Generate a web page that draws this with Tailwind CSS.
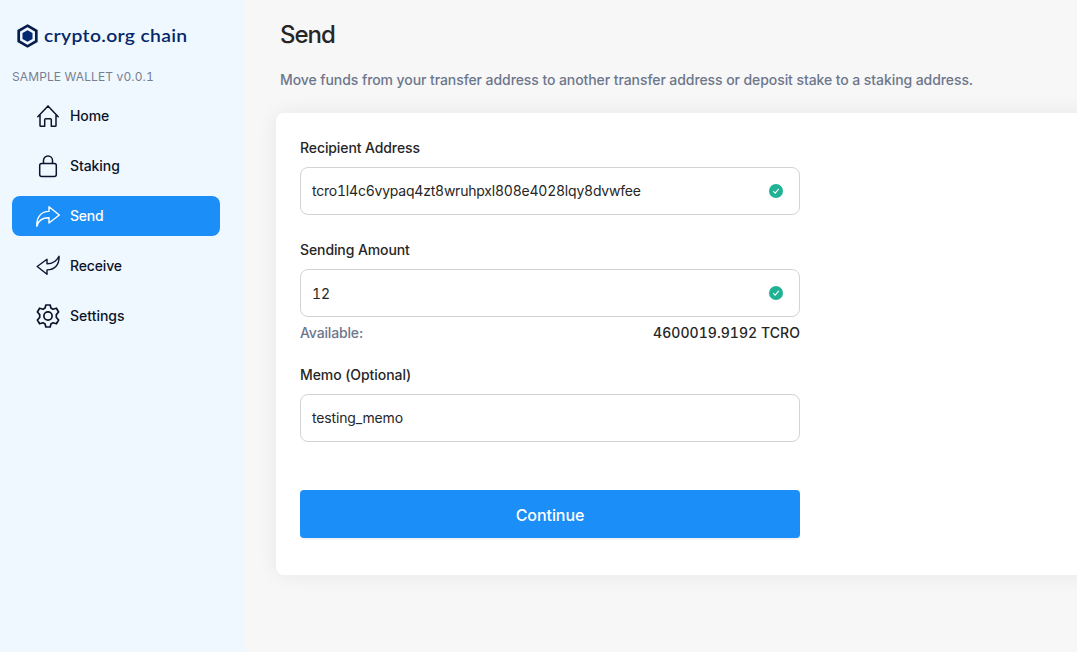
<!DOCTYPE html>
<html lang="en">
<head>
<meta charset="utf-8">
<title>Crypto.org Chain Wallet</title>
<script src="https://cdn.jsdelivr.net/npm/@tailwindcss/browser@4"></script>
</head>
<body class="flex h-screen overflow-hidden bg-[#f7f7f7] font-['Inter',sans-serif] text-sm font-medium tracking-[-0.07px] text-[#262626]">
<aside class="w-[244px] shrink-0 bg-[#f0f8ff] pt-[23px] pr-6 pl-3">
  <div class="flex h-[26px] items-center pl-1">
    <svg class="h-6 w-[23px] shrink-0" viewBox="0 0 23 24" fill="none">
      <path d="M11.5 1.7 20.3 6.8V17.2L11.5 22.3 2.7 17.2V6.8Z" stroke="#061c4a" stroke-width="2.7"/>
      <path d="M11.5 6.2 16.5 9.1V14.9L11.5 17.8 6.5 14.9V9.1Z" fill="#032a70"/>
    </svg>
    <svg class="h-[26px] w-[150px] shrink-0" viewBox="0 0 150 26"><text class="font-['Lato',sans-serif] font-semibold tracking-[0.3px]" x="5" y="18.5" font-size="18" textLength="143.5" lengthAdjust="spacingAndGlyphs" fill="#06286b">crypto.org chain</text></svg>
  </div>
  <div class="mt-[19px] text-xs leading-[18px] font-normal tracking-[0.12px] whitespace-nowrap text-[#777e90] tabular-nums">SAMPLE WALLET v0.0.1</div>
  <nav class="mt-[10px] flex flex-col gap-[10px] text-[#0b142a]">
    <a class="flex h-10 items-center gap-[10px] rounded-lg px-6">
      <svg class="size-6 shrink-0" viewBox="0 0 24 24" fill="none" stroke="currentColor" stroke-width="1.5" stroke-linejoin="round" stroke-linecap="round"><path d="M1.8 12.7 12 1.9 22.2 12.7M4 11v10.5q0 .8.8.8h3.9v-6.5q0-1 1-1h4.6q1 0 1 1v6.5h3.9q.8 0 .8-.8V11"/></svg>
      <span>Home</span>
    </a>
    <a class="flex h-10 items-center gap-[10px] rounded-lg px-6">
      <svg class="size-6 shrink-0" viewBox="0 0 24 24" fill="none" stroke="currentColor" stroke-width="1.5"><rect x="3.7" y="9.4" width="16.6" height="13" rx="2"/><path d="M7.5 9.4V6.5a4.5 4.5 0 0 1 9 0v2.9"/></svg>
      <span>Staking</span>
    </a>
    <a class="flex h-10 items-center gap-[10px] rounded-lg bg-[#1b8ef8] px-6 text-white">
      <svg class="size-6 shrink-0" viewBox="0 0 24 24" fill="none" stroke="currentColor" stroke-width="1.4" stroke-linejoin="round"><path d="M13 2.8 23.3 11 13 19v-5.2C7 13.6 2.6 16 .8 22.2.6 14 4 7.6 13 7.4Z"/></svg>
      <span class="tracking-[-0.2px]">Send</span>
    </a>
    <a class="flex h-10 items-center gap-[10px] rounded-lg px-6">
      <svg class="size-6 shrink-0" viewBox="0 0 24 24" fill="none" stroke="currentColor" stroke-width="1.4" stroke-linejoin="round"><path d="M11 5.3 1.2 12.5 11 20.3v-4.4C18 16 23.6 11.5 23 2.2 20.6 7.2 17 9.8 11 9.7Z"/></svg>
      <span class="tracking-[-0.15px]">Receive</span>
    </a>
    <a class="flex h-10 items-center gap-[10px] rounded-lg px-6">
      <svg class="size-6 shrink-0" viewBox="0 0 24 24" fill="none" stroke="currentColor" stroke-width="1.7" stroke-linejoin="round"><circle cx="12" cy="12" r="4.1"/><path d="M9.8 1h4.4l.7 3 2.1 1.2 3.4-1 2.2 3.8-2.3 2.6v2.8l2.3 2.6-2.2 3.8-3.4-1-2.1 1.2-.7 3H9.8l-.7-3L7 18.8l-3.4 1L1.4 16l2.3-2.6v-2.8L1.4 8l2.2-3.8 3.4 1L9.1 4Z"/></svg>
      <span class="tracking-normal">Settings</span>
    </a>
  </nav>
</aside>
<main class="min-w-0 flex-1 pl-8">
  <h1 class="pt-[19px] pl-1 text-2xl leading-8 font-medium tracking-[-1px]">Send</h1>
  <p class="mt-[18px] pl-1 leading-[22px] whitespace-nowrap tracking-[-0.08px] text-[#6d768b]">Move funds from your transfer address to another transfer address or deposit stake to a staking address.</p>
  <section class="-mr-10 mt-[22px] h-[462px] rounded-lg bg-white px-6 pt-6 shadow-[0_0_20px_rgba(0,0,0,0.07)]">
    <form class="flex w-[500px] flex-col">
      <label class="leading-[22px] tracking-[-0.1px]">Recipient Address</label>
      <div class="mt-2 flex h-12 items-center justify-between rounded-lg border border-[#d3d3d5] pr-4 pl-[11px] font-normal">
        <span class="tracking-[-0.22px] tabular-nums">tcro1l4c6vypaq4zt8wruhpxl808e4028lqy8dvwfee</span>
        <svg class="size-[14px]" viewBox="0 0 14 14" fill="none"><circle cx="7" cy="7" r="7" fill="#20b294"/><path d="m4.2 7.1 2 2 3.6-4.3" stroke="#fff" stroke-width="1.1"/></svg>
      </div>
      <label class="mt-6 leading-[22px] tracking-[-0.1px]">Sending Amount</label>
      <div class="mt-2 flex h-12 items-center justify-between rounded-lg border border-[#d3d3d5] pr-4 pl-[11px] font-normal">
        <span class="pt-[2px] tabular-nums">12</span>
        <svg class="size-[14px]" viewBox="0 0 14 14" fill="none"><circle cx="7" cy="7" r="7" fill="#20b294"/><path d="m4.2 7.1 2 2 3.6-4.3" stroke="#fff" stroke-width="1.1"/></svg>
      </div>
      <div class="mt-[5px] flex justify-between leading-[22px]"><span class="tracking-[-0.15px] text-[#6d768b]">Available:</span><span class="tracking-[0.05px] tabular-nums">4600019.9192 TCRO</span></div>
      <label class="mt-5 leading-[22px]">Memo (Optional)</label>
      <div class="mt-2 flex h-12 items-center rounded-lg border border-[#d3d3d5] pl-[11px] font-normal tracking-[-0.15px]">testing_memo</div>
      <button type="button" class="mt-12 h-12 rounded bg-[#1b8ef8] pt-[2px] text-base font-medium text-white shadow-[0_2px_0_rgba(0,0,0,0.045)]">Continue</button>
    </form>
  </section>
</main>
</body>
</html>
